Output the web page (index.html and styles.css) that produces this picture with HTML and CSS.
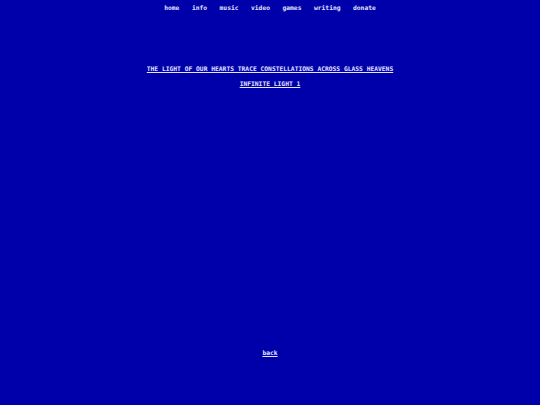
FILE: index.html
```html
<!DOCTYPE html>
<html>
<head>
<meta charset="utf-8">
<link rel="stylesheet" href="styles.css">
</head>
<body>
<div class="page">
  <nav class="nav">
    <a href="#">home</a>
    <a href="#">info</a>
    <a href="#">music</a>
    <a href="#">video</a>
    <a href="#">games</a>
    <a href="#">writing</a>
    <a href="#">donate</a>
  </nav>
  <main class="content">
    <a class="link" href="#">THE LIGHT OF OUR HEARTS TRACE CONSTELLATIONS ACROSS GLASS HEAVENS</a>
    <a class="link" href="#">INFINITE LIGHT 1</a>
  </main>
  <footer class="footer">
    <a class="link" href="#">back</a>
  </footer>
</div>
</body>
</html>
```
FILE: styles.css
```css
html, body {
  margin: 0;
  padding: 0;
  background: #0000aa;
}
.page {
  width: 540px;
  height: 405px;
  display: flex;
  flex-direction: column;
  align-items: center;
  font-family: "DejaVu Sans Mono", "Liberation Mono", monospace;
  font-weight: bold;
  font-size: 6.3px;
  line-height: 8px;
  color: #e4e4ff;
}
.nav {
  display: flex;
  gap: 12.5px;
  margin-top: 4px;
}
.nav a {
  color: #e4e4ff;
  text-decoration: none;
}
.content {
  display: flex;
  flex-direction: column;
  align-items: center;
  gap: 7px;
  margin-top: 53px;
}
.link {
  color: #e4e4ff;
  text-decoration: underline;
}
.footer {
  margin-top: 261px;
}
```
